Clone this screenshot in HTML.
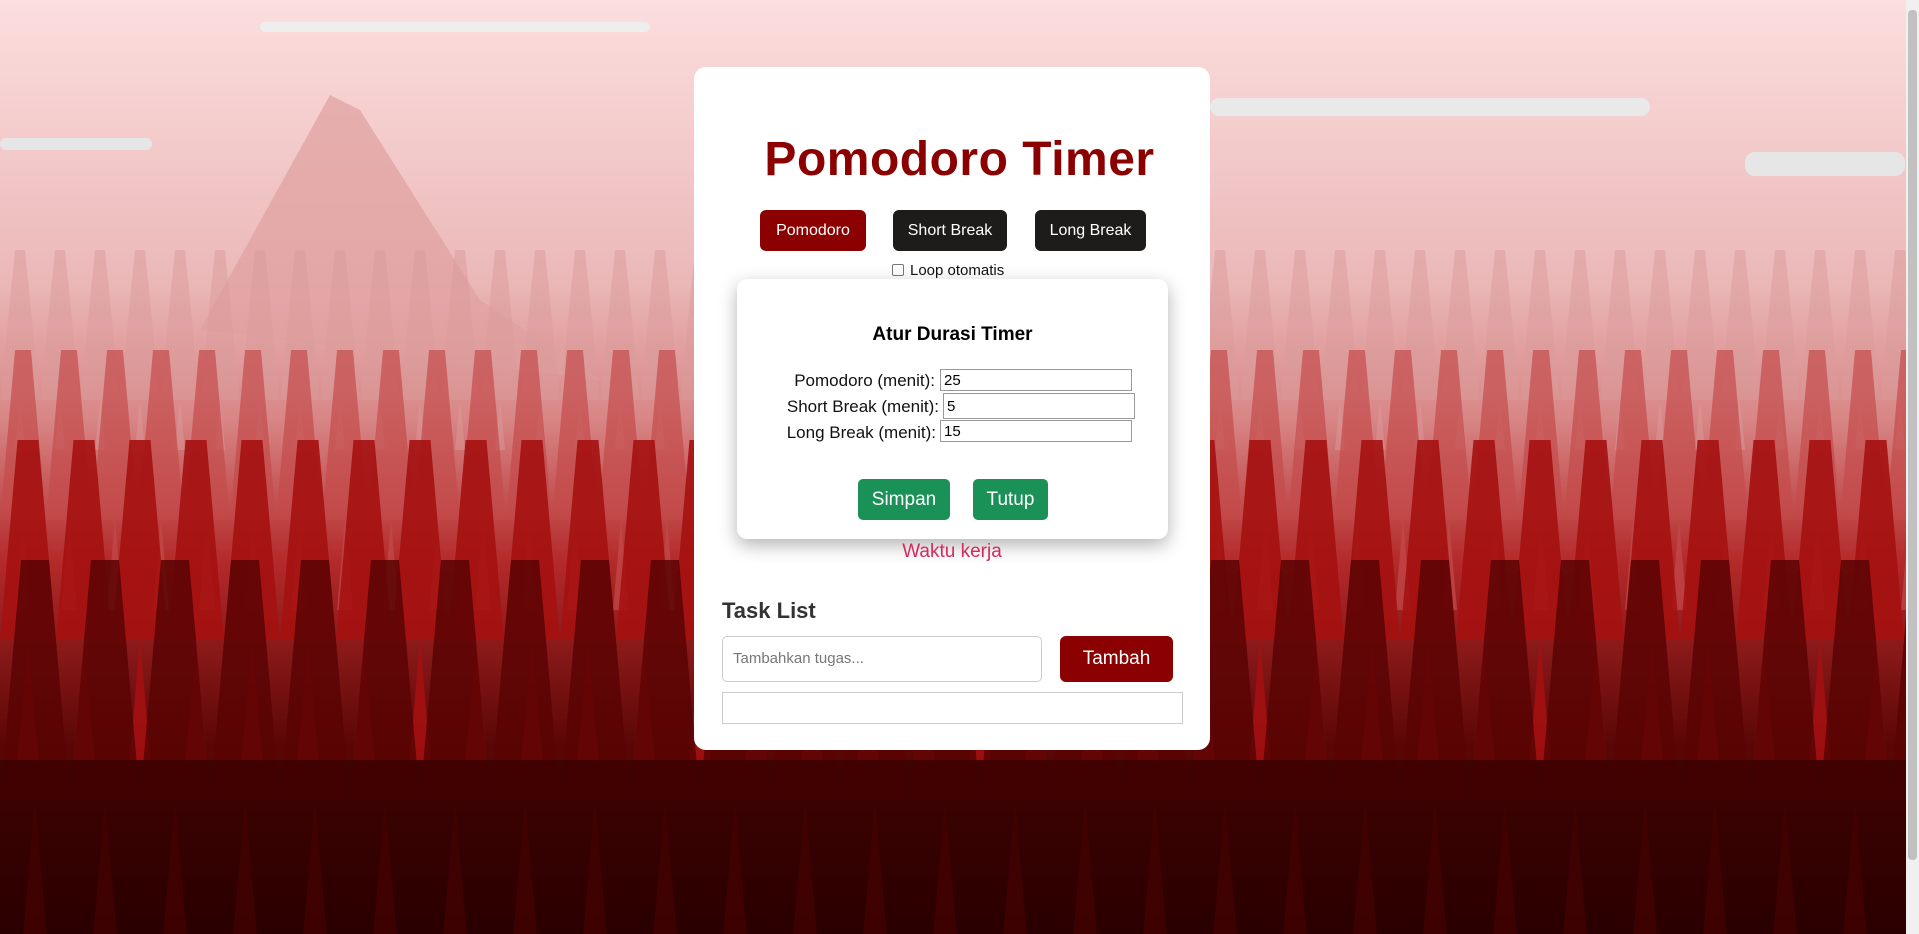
<!DOCTYPE html>
<html><head><meta charset="utf-8"><style>
html,body{margin:0;padding:0;width:1919px;height:934px;overflow:hidden;font-family:"Liberation Sans",sans-serif}
#bg{position:absolute;left:0;top:0}
.card{position:absolute;left:694px;top:67px;width:516px;height:683px;background:#fff;border-radius:12px}
h1{position:absolute;left:0;width:100%;top:132px;margin:0;text-align:center;font-size:48px;color:#8b0000;font-weight:bold;letter-spacing:0.5px}
.btn{position:absolute;top:210px;height:41px;border-radius:6px;color:#fff;font-size:16px;line-height:41px;text-align:center}
.loop{position:absolute;left:892px;top:262px;font-size:15px;color:#111}
.loop span{display:inline-block;width:10px;height:10px;border:1px solid #777;border-radius:2px;margin-right:6px;vertical-align:-1px}
.modal{position:absolute;left:737px;top:279px;width:431px;height:260px;background:#fff;border-radius:10px;box-shadow:0 6px 18px rgba(0,0,0,.3)}
.lbl{position:absolute;font-size:17px;color:#111;white-space:nowrap}
.inp{position:absolute;left:940px;width:192px;height:22px;border:1px solid #999;font-size:15px;line-height:22px;padding-left:3px;box-sizing:border-box}
.g{position:absolute;top:479px;height:41px;background:#1a9157;color:#fff;border-radius:5px;font-size:19px;line-height:41px;text-align:center}
</style></head><body>
<svg id="bg" width="1919" height="934" viewBox="0 0 1919 934">
<defs>
<linearGradient id="sky" x1="0" y1="0" x2="0" y2="1">
<stop offset="0" stop-color="#fcdede"/><stop offset="0.3" stop-color="#ebb8b8"/><stop offset="0.45" stop-color="#d88585"/><stop offset="0.6" stop-color="#b42a2a"/><stop offset="0.8" stop-color="#5a0606"/><stop offset="1" stop-color="#2a0000"/>
</linearGradient>
<pattern id="t1" width="40" height="200" patternUnits="userSpaceOnUse"><polygon points="20,0 40,200 0,200" fill="#d99a9a"/></pattern>
<pattern id="t2" width="46" height="260" patternUnits="userSpaceOnUse"><polygon points="23,0 46,260 0,260" fill="#c44a4a"/></pattern>
<pattern id="t3" width="56" height="320" patternUnits="userSpaceOnUse"><polygon points="28,0 56,320 0,320" fill="#a51010"/></pattern>
<pattern id="t4" width="70" height="400" patternUnits="userSpaceOnUse"><polygon points="35,0 70,400 0,400" fill="#5a0303"/></pattern>
</defs>
<rect width="1919" height="934" fill="url(#sky)"/>
<polygon points="200,330 330,95 360,110 480,300 600,380" fill="#e0a0a0" opacity=".7"/>
<rect x="0" y="250" width="1919" height="200" fill="url(#t1)" opacity=".5"/>
<rect x="0" y="350" width="1919" height="260" fill="url(#t2)" opacity=".7"/>
<rect x="-20" y="440" width="1960" height="320" fill="url(#t3)" opacity=".9"/>
<rect x="0" y="560" width="1919" height="400" fill="url(#t4)" opacity=".85"/>
<rect x="0" y="760" width="1919" height="174" fill="#2a0000" opacity=".5"/>
<rect x="260" y="22" width="390" height="10" rx="5" fill="#eee"/>
<rect x="0" y="138" width="152" height="12" rx="6" fill="#e6e6e6"/>
<rect x="1210" y="98" width="440" height="18" rx="9" fill="#e9e9e9"/>
<rect x="1745" y="152" width="160" height="24" rx="10" fill="#e6e6e6"/>
<rect x="1906" y="0" width="13" height="934" fill="#f0f0f0"/>
<rect x="1908" y="10" width="9" height="850" rx="4" fill="#c1c1c1"/>
</svg>
<div class="card"></div>
<h1>Pomodoro Timer</h1>
<div class="btn" style="left:760px;width:106px;background:#8b0000">Pomodoro</div>
<div class="btn" style="left:893px;width:114px;background:#1e1b1b">Short Break</div>
<div class="btn" style="left:1035px;width:111px;background:#1e1b1b">Long Break</div>
<div class="loop"><span></span>Loop otomatis</div>
<div class="modal"></div>
<div style="position:absolute;left:737px;width:431px;top:324px;text-align:center;font-weight:bold;font-size:19px;color:#000">Atur Durasi Timer</div>
<div class="lbl" style="top:371px;right:984px">Pomodoro (menit):</div>
<div class="lbl" style="top:397px;right:980px">Short Break (menit):</div>
<div class="lbl" style="top:423px;right:983px">Long Break (menit):</div>
<div class="inp" style="top:369px">25</div>
<div class="inp" style="top:393px;left:943px;height:26px;line-height:26px">5</div>
<div class="inp" style="top:420px">15</div>
<div class="g" style="left:858px;width:92px">Simpan</div>
<div class="g" style="left:973px;width:75px">Tutup</div>
<div style="position:absolute;left:694px;width:516px;top:541px;text-align:center;color:#d42a5f;font-size:19px">Waktu kerja</div>
<div style="position:absolute;left:722px;top:598px;font-weight:bold;font-size:22px;color:#333">Task List</div>
<div style="position:absolute;left:722px;top:636px;width:320px;height:46px;border:1px solid #ccc;border-radius:5px;box-sizing:border-box;padding-left:10px;line-height:44px;color:#777;font-size:15px">Tambahkan tugas...</div>
<div style="position:absolute;left:1060px;top:636px;width:113px;height:46px;background:#8b0000;border-radius:6px;color:#fff;font-size:19px;line-height:46px;text-align:center">Tambah</div>
<div style="position:absolute;left:722px;top:692px;width:461px;height:32px;border:1px solid #ccc;box-sizing:border-box"></div>
</body></html>
